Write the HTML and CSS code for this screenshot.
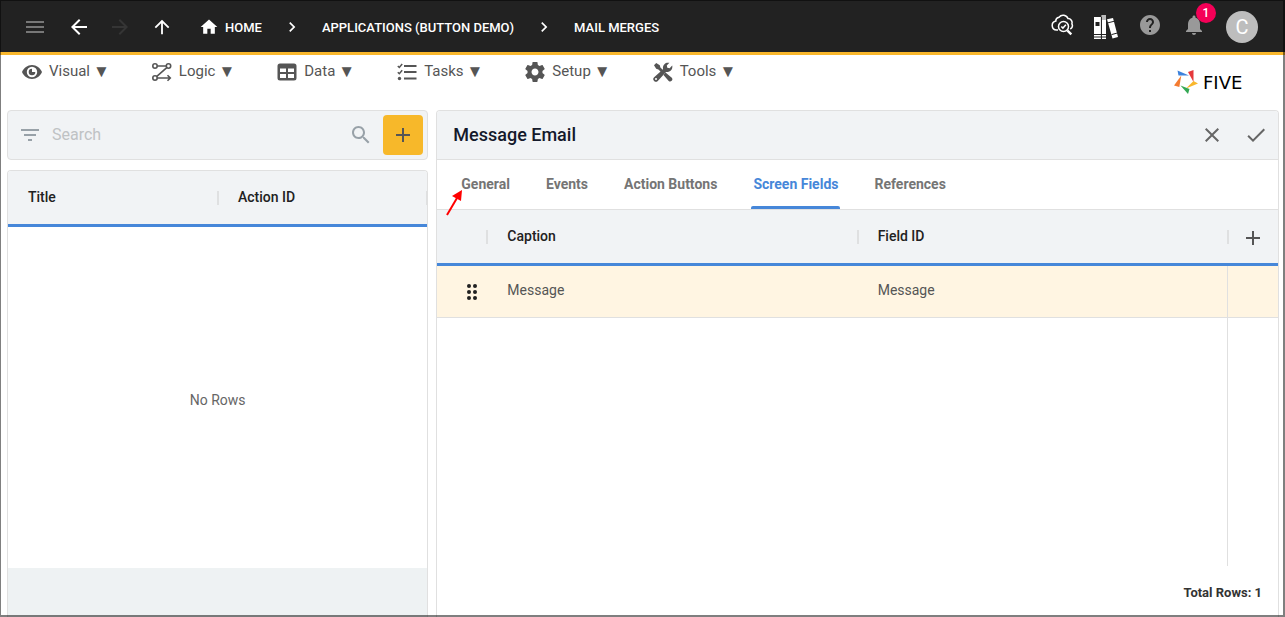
FILE: index.html
```html
<!DOCTYPE html>
<html lang="en">
<head>
<meta charset="utf-8">
<title>Five - Mail Merges</title>
<meta name="viewport" content="width=device-width, initial-scale=1">
<link rel="stylesheet" href="styles.css">
</head>
<body>
<div class="app">
  <header class="topbar">
    <button class="icon-button menu-button" aria-label="Menu"><svg viewBox="0 0 24 24"><path d="M3 18h18v-2H3v2zm0-5h18v-2H3v2zm0-7v2h18V6H3z"/></svg></button>
    <div class="history">
      <button class="icon-button" aria-label="Back"><svg viewBox="0 0 24 24"><path d="M20 11H7.830l5.590-5.590L12 4l-8 8 8 8 1.410-1.410L7.830 13H20v-2z"/></svg></button>
      <button class="icon-button forward" aria-label="Forward" disabled><svg viewBox="0 0 24 24"><path d="M12 4l-1.410 1.410L16.170 11H4v2h12.170l-5.580 5.590L12 20l8-8z"/></svg></button>
      <button class="icon-button" aria-label="Up"><svg class="up" viewBox="0 0 24 24"><path d="M4 12l1.410 1.410L11 7.830V20h2V7.830l5.580 5.590L20 12l-8-8-8 8z"/></svg></button>
    </div>
    <nav class="crumbs" aria-label="Breadcrumb">
      <a class="crumb home" href="#"><svg viewBox="0 0 24 24"><path d="M10 20v-6h4v6h5v-8h3L12 3 2 12h3v8z"/></svg>HOME</a>
      <svg class="chevron" viewBox="0 0 24 24"><path d="M8.600 16.600 13.200 12 8.600 7.400 10 6l6 6-6 6z"/></svg>
      <a class="crumb" href="#">APPLICATIONS (BUTTON DEMO)</a>
      <svg class="chevron" viewBox="0 0 24 24"><path d="M8.600 16.600 13.200 12 8.600 7.400 10 6l6 6-6 6z"/></svg>
      <a class="crumb" href="#">MAIL MERGES</a>
    </nav>
    <div class="tools">
      <button class="icon-button raised" aria-label="Inspect cloud"><svg viewBox="0 0 24 24" class="line"><path d="M8 17H6.500a4.500 4.500 0 0 1-.7-8.900A3.800 3.800 0 0 1 9 4.200 5.200 5.200 0 0 1 18 5.600a4 4 0 0 1 3.900 5.200 4 4 0 0 1-1.600 5.200"/><circle cx="13.500" cy="13.500" r="5"/><path d="m11.300 13.400 1.600 1.700 3-3.300"/><path d="m17.300 17.400 4 4" stroke-width="2.400"/></svg></button>
      <button class="icon-button" aria-label="Library"><svg viewBox="0 0 24 24"><path d="M0 2h7v22H0zM7.700 0H12v24H7.700zM13 4.200l6-1.200 5 19-5.500 1.600z"/><path fill="#bbb" d="M7.700 0H12v5H7.700z"/><path stroke="#222" fill="none" d="M0 19.500h12M0 22h12M14 7.800l6-1.500M17.500 19.600l5.500-1.500M7.400 2v22"/><path fill="#222" d="M1.500 7h4v4h-4z"/></svg></button>
      <button class="icon-button muted raised" aria-label="Help"><svg viewBox="0 0 24 24"><path d="M12 2C6.480 2 2 6.480 2 12s4.480 10 10 10 10-4.480 10-10S17.520 2 12 2zm1 17h-2v-2h2v2zm2.070-7.750-.9.920C13.450 12.900 13 13.500 13 15h-2v-.5c0-1.100.45-2.100 1.170-2.830l1.240-1.260c.37-.36.59-.86.59-1.410 0-1.100-.9-2-2-2s-2 .9-2 2H8c0-2.210 1.790-4 4-4s4 1.790 4 4c0 .88-.36 1.680-.93 2.250z"/></svg></button>
      <button class="icon-button muted raised bell" aria-label="Notifications, 1 new"><svg viewBox="0 0 24 24"><path d="M12 22c1.100 0 2-.9 2-2h-4c0 1.100.89 2 2 2zm6-6v-5c0-3.070-1.640-5.640-4.500-6.320V4c0-.83-.67-1.500-1.500-1.500s-1.500.67-1.500 1.500v.68C7.630 5.360 6 7.920 6 11v5l-2 2v1h16v-1l-2-2z"/></svg><span class="badge">1</span></button>
      <button class="avatar" aria-label="Account">C</button>
    </div>
  </header>

  <div class="menubar">
    <nav class="menus" aria-label="Main">
      <button class="menu"><svg viewBox="0 0 20 20"><path fill-rule="evenodd" d="M10 3C5.500 3 1.700 5.900 0 10c1.700 4.100 5.500 7 10 7s8.300-2.900 10-7c-1.700-4.100-5.500-7-10-7zm0 12.200a5.200 5.200 0 1 1 0-10.400 5.200 5.200 0 0 1 0 10.400z"/><path d="M10 6.700a3.300 3.300 0 1 0 3.300 3.300L10 10z"/></svg><span class="label">Visual</span><span class="caret">▼</span></button>
      <button class="menu"><svg viewBox="0 0 20 20" class="stroke"><circle cx="3" cy="4" r="2.200"/><circle cx="16.500" cy="4" r="2.200"/><circle cx="3" cy="16" r="2.200"/><path d="M5.400 4h8.800M14.800 5.700 4.800 14.400M5.400 16H18M15.500 13.200l2.800 2.800-2.800 2.800"/></svg><span class="label">Logic</span><span class="caret">▼</span></button>
      <button class="menu"><svg viewBox="0 0 20 20"><path fill-rule="evenodd" d="M3 1.500h14a2.500 2.500 0 0 1 2.500 2.500v12a2.500 2.500 0 0 1-2.500 2.500H3A2.500 2.500 0 0 1 .5 16V4A2.500 2.500 0 0 1 3 1.500zM3 6.500V10h6V6.500zm8 0V10h6V6.500zM3 12v4h6v-4zm8 0v4h6v-4z"/></svg><span class="label">Data</span><span class="caret">▼</span></button>
      <button class="menu"><svg viewBox="0 0 20 20"><path d="M7 3h12.500v2H7zM7 9h12.500v2H7zM7 15.500h12.500v2H7z"/><circle cx="2.500" cy="16.500" r="1.700"/><path fill="none" stroke="currentColor" stroke-width="1.500" d="m.8 4 1.500 1.500L5.200 2M.8 10.200l1.500 1.500 2.900-3.500"/></svg><span class="label">Tasks</span><span class="caret">▼</span></button>
      <button class="menu"><svg viewBox="2 2 20 20"><path d="M19.430 12.980c.04-.32.07-.64.07-.98s-.03-.66-.07-.98l2.110-1.650c.19-.15.24-.42.12-.64l-2-3.460c-.12-.22-.39-.3-.61-.22l-2.490 1c-.52-.4-1.080-.73-1.690-.98l-.38-2.650C14.460 2.180 14.250 2 14 2h-4c-.25 0-.46.18-.49.42l-.38 2.650c-.61.25-1.170.59-1.690.98l-2.490-1c-.23-.09-.49 0-.61.22l-2 3.460c-.13.22-.07.49.12.640l2.110 1.650c-.04.32-.07.65-.07.98s.03.66.07.98l-2.110 1.650c-.19.15-.24.42-.12.64l2 3.460c.12.22.39.3.61.22l2.490-1c.52.4 1.080.73 1.690.98l.38 2.650c.03.24.24.42.49.42h4c.25 0 .46-.18.49-.42l.38-2.650c.61-.25 1.170-.59 1.690-.98l2.490 1c.23.09.49 0 .61-.22l2-3.460c.12-.22.07-.49-.12-.64l-2.110-1.650zM12 15.500c-1.930 0-3.500-1.570-3.500-3.500s1.570-3.500 3.500-3.500 3.500 1.570 3.500 3.500-1.570 3.500-3.500 3.500z"/></svg><span class="label">Setup</span><span class="caret">▼</span></button>
      <button class="menu"><svg viewBox="0 0 20 20"><path d="M1 3.200 3.200 1l3.600 2.200.6 2.200 3.600 3.600-2 2-3.600-3.600-2.200-.6zM12.500 10.500l6.300 5.300a2.200 2.200 0 0 1-3.100 3.100L10.500 13z"/><path d="M19.200 3.600 16.600 6.200l-2.300-.5-.5-2.300L16.400.8a5.200 5.200 0 0 0-6.300 6.400L1.100 15.200a2.600 2.600 0 1 0 3.700 3.700l8.200-9a5.200 5.200 0 0 0 6.200-6.300zM3 18a1 1 0 1 1 0-2 1 1 0 0 1 0 2z"/></svg><span class="label">Tools</span><span class="caret">▼</span></button>
    </nav>
    <a class="brand" href="#" aria-label="Five">
      <svg viewBox="0 0 24 24"><path fill="#3d82dc" d="m3.500.5 11.500 5H4.500z"/><path fill="#e5383b" d="M19.500 0v12l-5.500-10z"/><path fill="#f9b72c" d="M24 13.500 12 18.500l7.500-7.500z"/><path fill="#34a853" d="m6.500 15.500 9 3.500-1.500 5z"/><path fill="#f47b30" d="M7.300 5.500 5.300 17 0 15.500z"/></svg>
      <span class="wordmark">FIVE</span>
    </a>
  </div>

  <main class="workspace">
    <section class="list">
      <div class="search">
        <button class="icon-button" aria-label="Filter"><svg viewBox="0 0 24 24"><path d="M10 18h4v-2h-4v2zM3 6v2h18V6H3zm3 7h12v-2H6v2z"/></svg></button>
        <input class="search-input" type="text" placeholder="Search" aria-label="Search">
        <button class="icon-button" aria-label="Run search"><svg viewBox="0 0 24 24"><path d="M15.500 14h-.79l-.28-.27C15.410 12.590 16 11.110 16 9.500 16 5.910 13.090 3 9.500 3S3 5.910 3 9.500 5.910 16 9.500 16c1.610 0 3.090-.59 4.230-1.570l.27.28v.79l5 4.990L20.490 19l-4.990-5zm-6 0C7.010 14 5 11.990 5 9.500S7.010 5 9.500 5 14 7.010 14 9.500 11.990 14 9.500 14z"/></svg></button>
        <button class="add" aria-label="Add"><svg viewBox="0 0 24 24"><path d="M19 13h-6v6h-2v-6H5v-2h6V5h2v6h6v2z"/></svg></button>
      </div>
      <div class="list-grid">
        <table class="grid">
          <colgroup><col class="half"><col></colgroup>
          <thead><tr><th>Title</th><th class="divided end">Action ID</th></tr></thead>
        </table>
        <p class="empty">No Rows</p>
        <div class="list-footer"></div>
      </div>
    </section>

    <section class="detail">
      <div class="detail-head">
        <h1 class="detail-title">Message Email</h1>
        <button class="icon-button" aria-label="Cancel"><svg viewBox="0 0 24 24"><path d="M19 6.410 17.590 5 12 10.590 6.410 5 5 6.410 10.590 12 5 17.590 6.410 19 12 13.410 17.590 19 19 17.590 13.410 12z"/></svg></button>
        <button class="icon-button" aria-label="Save"><svg viewBox="0 0 24 24"><path d="M9 16.170 4.830 12l-1.420 1.410L9 19 21 7l-1.410-1.410z"/></svg></button>
      </div>
      <div class="tabs" role="tablist">
        <button class="tab" role="tab">General<svg class="pointer" viewBox="0 0 18 26"><path stroke="red" stroke-width="2" d="M2 25 12 8"/><path fill="red" d="M17 0 16 11 7 6z"/></svg></button>
        <button class="tab" role="tab">Events</button>
        <button class="tab" role="tab">Action Buttons</button>
        <button class="tab active" role="tab" aria-selected="true">Screen Fields</button>
        <button class="tab" role="tab">References</button>
      </div>
      <div class="fields">
        <table class="grid">
          <colgroup><col class="narrow"><col><col><col class="actions"></colgroup>
          <thead><tr><th></th><th class="divided">Caption</th><th class="divided">Field ID</th><th class="divided action"><button class="icon-button" aria-label="Add field"><svg viewBox="0 0 24 24"><path d="M19 13h-6v6h-2v-6H5v-2h6V5h2v6h6v2z"/></svg></button></th></tr></thead>
          <tbody><tr><td class="handle"><svg viewBox="0 0 12 18"><circle cx="3" cy="3" r="2"/><circle cx="9" cy="3" r="2"/><circle cx="3" cy="9" r="2"/><circle cx="9" cy="9" r="2"/><circle cx="3" cy="15" r="2"/><circle cx="9" cy="15" r="2"/></svg></td><td>Message</td><td>Message</td><td class="last"></td></tr></tbody>
        </table>
      </div>
      <p class="total">Total Rows: 1</p>
    </section>
  </main>
</div>
</body>
</html>
```
FILE: styles.css
```css
* { box-sizing: border-box; }

body {
  margin: 0;
  background: #fff;
  color: #212121;
  font-family: Roboto, "Liberation Sans", sans-serif;
  font-size: 14px;
}

button {
  margin: 0;
  padding: 0;
  border: 0;
  background: none;
  color: inherit;
  font: inherit;
}

a { color: inherit; text-decoration: none; }
p { margin: 0; }
svg { display: block; flex: none; fill: currentColor; }

.app {
  display: flex;
  flex-direction: column;
  height: 100vh;
  overflow: hidden;
}

.app::after {
  content: "";
  position: fixed;
  inset: 0;
  border: solid rgba(0, 0, 0, 0.5);
  border-width: 1px 2px 2px 1px;
  pointer-events: none;
}

.icon-button { flex: none; width: 24px; height: 24px; }
.icon-button svg { width: 24px; height: 24px; }

/* Top bar */
.topbar {
  display: flex;
  flex: none;
  align-items: center;
  height: 55px;
  padding: 2px 27px 0 23px;
  border-bottom: 3px solid #f9b72c;
  background: #222;
  color: #fff;
}

.menu-button { margin-right: 20px; color: #777; }
.history { display: flex; gap: 17px; margin-right: 24px; }
.forward { color: #353535; }
.history .up { width: 22px; margin: 0 1px 0 2px; }

.crumbs { display: flex; align-items: center; font-size: 13px; font-weight: 500; }
.crumb { display: flex; align-items: center; gap: 4px; }
.crumb svg { width: 24px; height: 20px; }
.chevron { width: 20px; height: 20px; margin: 0 20px; }

.tools { display: flex; align-items: center; gap: 20px; margin-left: auto; }
.line { fill: none; stroke: currentColor; stroke-width: 1.5; }
.muted { color: #999; }
.raised { margin-bottom: 4px; }
.bell { position: relative; }

.badge {
  position: absolute;
  top: -10px;
  left: 14px;
  width: 20px;
  height: 20px;
  border-radius: 10px;
  background: #f50057;
  color: #fff;
  font-size: 12px;
  font-weight: 500;
  line-height: 20px;
}

.avatar {
  width: 32px;
  height: 32px;
  border-radius: 50%;
  background: #bdbdbd;
  font-size: 20px;
}

/* Menu bar */
.menubar {
  display: flex;
  flex: none;
  align-items: flex-start;
  justify-content: space-between;
  height: 55px;
  padding: 6px 23px 0 22px;
}

.menus { display: flex; gap: 42px; }

.menu {
  display: flex;
  align-items: center;
  gap: 7px;
  height: 22px;
  color: #555;
  font-size: 15px;
  line-height: 20px;
}

.menu svg { width: 20px; height: 20px; }
.menu .stroke { fill: none; stroke: currentColor; stroke-width: 1.6; }
.label,
.caret { padding-bottom: 2px; }
.caret { margin-left: -4px; font-size: 17px; }

.brand { display: flex; align-items: center; gap: 5px; height: 42px; color: #000; }
.brand svg { width: 24px; height: 24px; }
.wordmark { width: 59px; font: 18px "DejaVu Sans", sans-serif; }

/* Workspace */
.workspace {
  display: grid;
  flex: 1;
  grid-template-columns: minmax(0, 1fr) minmax(0, 2fr);
  gap: 8px;
  min-height: 0;
  padding: 0 6px 0 7px;
}

.list { display: flex; flex-direction: column; gap: 10px; }

.search {
  display: flex;
  flex: none;
  align-items: center;
  height: 50px;
  padding: 0 4px 0 10px;
  border: 1px solid #e0e0e0;
  border-radius: 4px;
  background: #f1f3f5;
  color: #98a1a8;
}

.search-input {
  flex: 1;
  min-width: 0;
  padding: 0 10px 2px;
  border: 0;
  background: none;
  color: #212121;
  font: 16px Roboto, "Liberation Sans", sans-serif;
}

.search-input::placeholder { color: #bfc2c4; }

.add {
  display: grid;
  place-items: center;
  width: 40px;
  height: 40px;
  margin-left: 10px;
  border-radius: 4px;
  background: #f7b82a;
  color: #555;
}

.add svg { width: 24px; height: 24px; }

.list-grid,
.detail {
  display: flex;
  flex: 1;
  flex-direction: column;
  border: 1px solid #e0e0e0;
  border-bottom: 0;
  border-radius: 4px 4px 0 0;
  overflow: hidden;
}

.grid { width: 100%; border-collapse: separate; border-spacing: 0; table-layout: fixed; }
.half { width: 209px; }
.narrow { width: 49px; }
.actions { width: 51px; }

.grid th {
  height: 56px;
  padding: 0 20px 2px;
  border-bottom: 3px solid #4687d9;
  background: #f1f3f5;
  font-weight: 500;
  text-align: left;
}

.grid .divided {
  padding-left: 21px;
  background: linear-gradient(#dfe0e1, #dfe0e1) no-repeat left center / 2px 14px #f1f3f5;
}

.grid .end {
  background:
    linear-gradient(#dfe0e1, #dfe0e1) no-repeat left center / 2px 14px,
    linear-gradient(#dfe0e1, #dfe0e1) no-repeat right center / 1px 14px #f1f3f5;
}

.grid td {
  height: 52px;
  padding: 0 20px 4px 21px;
  border-bottom: 1px solid #e0e0e0;
  background: #fff5e2;
  color: #555;
}

.grid .action { padding: 3px 0 0 14px; }
.action .icon-button { display: block; color: #555; }
.grid .handle { padding: 0 0 0 29px; color: #212121; }
.handle svg { width: 12px; height: 18px; }
.grid .last { border-left: 1px solid #e0e0e0; }

.empty { display: grid; flex: 1; place-items: center; padding-top: 4px; color: #666; }
.list-footer { flex: none; height: 49px; background: #eef2f3; }

/* Detail */
.detail-head {
  display: flex;
  flex: none;
  align-items: center;
  gap: 20px;
  height: 49px;
  padding: 0 10px 0 16px;
  border-bottom: 1px solid #e0e0e0;
  background: #f1f3f5;
  color: #666;
}

.detail-title { flex: 1; margin: 0; padding-bottom: 2px; color: #14192b; font-size: 18px; font-weight: 500; }

.tabs {
  display: flex;
  flex: none;
  gap: 36px;
  height: 50px;
  padding: 0 24px;
  border-bottom: 1px solid #e0e0e0;
}

.tab { position: relative; padding-bottom: 2px; color: #757575; font-weight: 700; }
.tab.active { color: #4687d9; }

.tab.active::after {
  content: "";
  position: absolute;
  inset: auto -2px 0;
  height: 3px;
  border-radius: 2px 2px 0 0;
  background: #4687d9;
}

.pointer { position: absolute; top: 30px; left: -16px; width: 18px; height: 26px; z-index: 1; }

.fields {
  flex: 1;
  background: linear-gradient(#e0e0e0, #e0e0e0) no-repeat right 50px top / 1px 100%;
}

.total {
  flex: none;
  height: 51px;
  padding: 0 16px;
  color: #333;
  font-size: 13px;
  font-weight: 700;
  line-height: 54px;
  text-align: right;
}
```
